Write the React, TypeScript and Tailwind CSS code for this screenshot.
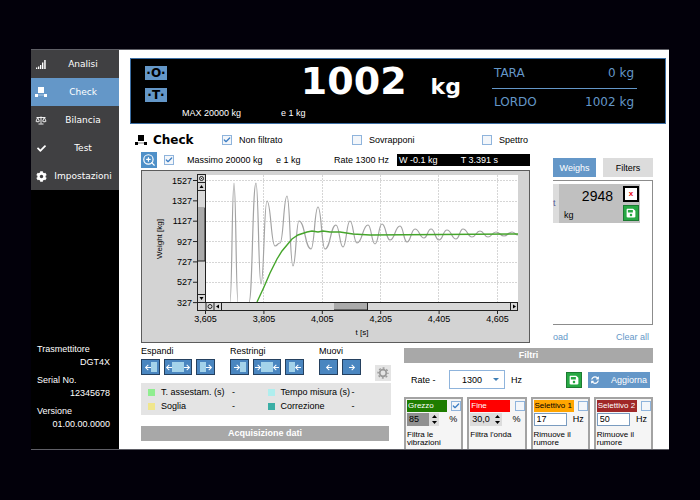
import { ReactNode } from "react";
import {
  FaArrowLeft,
  FaArrowRight,
  FaCheck,
  FaCog,
  FaSave,
  FaSyncAlt,
} from "react-icons/fa";
import { Check, ZoomIn } from "lucide-react";

type Point = [number, number];

const rawSignal: Point[][] = [
  [[89, 132], [93, 13], [97, 132]],
  [
    [108, 132], [115, 13], [120, 114], [126, 31], [134, 76], [139, 73],
    [146, 26], [152, 96], [158, 51], [170, 79], [177, 37], [184, 79],
    [195, 55], [202, 77], [209, 51], [216, 73], [227, 55], [234, 74],
    [241, 54], [249, 70], [259, 56], [266, 72], [274, 59], [283, 68],
    [290, 59], [298, 70], [306, 60], [315, 69], [322, 59], [331, 67],
    [339, 61], [347, 67], [355, 62], [363, 66], [371, 62], [377, 65],
  ],
];

const filteredSignal =
  "M116 132 L123 117 L129 103 L136 89 L141 81 L146 75 L151 69 L157 65 L166 62 L171 61 L177 62 L182 61 L189 62 L199 62 L212 64 L229 65 L377 64";

// horizontal tangents on every extreme
function toPath(points: Point[]) {
  return points
    .map(([x, y], i) => {
      if (i === 0) return `M${x} ${y}`;
      const [px, py] = points[i - 1];
      const mx = (px + x) / 2;
      return `C${mx} ${py} ${mx} ${y} ${x} ${y}`;
    })
    .join(" ");
}

function ModulesIcon({ className }: { className?: string }) {
  return (
    <svg viewBox="0 0 12 12" className={className} fill="currentColor">
      <rect x="3" y="1" width="6" height="6" />
      <rect x="0" y="8" width="3" height="3" />
      <rect x="9" y="8" width="3" height="3" />
      <path d="M3 9h6" stroke="currentColor" strokeWidth="0.5" />
    </svg>
  );
}

function SignalIcon() {
  return (
    <svg viewBox="0 0 10 9" className="h-[9px] w-[10px]" fill="currentColor">
      <path d="M0 7.500h1.300V9H0zM2 6.500h1.300V9H2zM4 5h1.300v4H4zM6 2.500h1.400V9H6zM8.200 0h1.500v9H8.200z" />
    </svg>
  );
}

function BalanceIcon() {
  return (
    <svg viewBox="0 0 12 9" className="h-[9px] w-3" fill="none" stroke="currentColor" strokeWidth="0.9">
      <path d="M1.500 1.500h9M6 0.500v7M3.500 8h5M2.700 1.500L1 5.200M2.700 1.500l1.700 3.700M9.300 1.500L7.600 5.200M9.300 1.500L11 5.200" />
      <path d="M0.700 5.200h4c-.3 1.500-3.700 1.500-4 0zM7.300 5.200h4c-.3 1.500-3.700 1.500-4 0z" fill="currentColor" stroke="none" />
    </svg>
  );
}

function GearIcon() {
  return (
    <svg viewBox="0 0 12 12" className="h-3 w-3" fill="none" stroke="currentColor">
      <circle cx="6" cy="6" r="3.300" strokeWidth="1.700" />
      <circle cx="6" cy="6" r="4.900" strokeWidth="1.500" strokeDasharray="1.924 1.924" strokeDashoffset="0.960" />
    </svg>
  );
}

function CheckBox({
  label,
  checked,
  hideLabel,
}: {
  label: string;
  checked?: boolean;
  hideLabel?: boolean;
}) {
  return (
    <label className="flex items-center gap-[7px]">
      <span className="relative block h-[10px] w-[10px]">
        <input
          type="checkbox"
          defaultChecked={checked}
          aria-label={label}
          className="peer block h-[10px] w-[10px] appearance-none border border-[#8fb4dc] bg-[#f3f6fa]"
        />
        <Check
          className="pointer-events-none absolute inset-px hidden h-2 w-2 text-[#3f7fc4] peer-checked:block"
          strokeWidth={4}
        />
      </span>
      {!hideLabel && <span>{label}</span>}
    </label>
  );
}

const menu = [
  { label: "Analisi", icon: <SignalIcon /> },
  { label: "Check", icon: <ModulesIcon className="h-3 w-3" />, active: true },
  { label: "Bilancia", icon: <BalanceIcon /> },
  { label: "Test", icon: <FaCheck className="h-[9px] w-[9px]" /> },
  { label: "Impostazioni", icon: <FaCog className="h-[11px] w-[11px]" /> },
];

const info = [
  { label: "Trasmettitore", value: "DGT4X" },
  { label: "Serial No.", value: "12345678" },
  { label: "Versione", value: "01.00.00.0000" },
];

function Sidebar() {
  return (
    <aside className="flex w-[88px] shrink-0 flex-col justify-between bg-black text-white">
      <nav className="font-['DejaVu_Sans',sans-serif]">
        {menu.map((item) => (
          <a
            key={item.label}
            href="#"
            className={`flex h-7 items-center pl-1 ${
              item.active ? "bg-[#6497c8]" : "bg-[#404042]"
            }`}
          >
            <span className="flex w-3 justify-center">{item.icon}</span>
            <span className="flex-1 text-center">{item.label}</span>
          </a>
        ))}
      </nav>
      <dl className="pb-[19px] pl-[6px] pr-[9px]">
        {info.map((item) => (
          <div key={item.label} className="mt-[6px]">
            <dt className="h-[13px]">{item.label}</dt>
            <dd className="h-3 text-right">{item.value}</dd>
          </div>
        ))}
      </dl>
    </aside>
  );
}

function Display() {
  return (
    <header className="flex h-[66px] border border-[#3c6ea3] bg-black pl-[14px] pr-7 font-['DejaVu_Sans',sans-serif] text-white">
      <div className="flex flex-1 flex-col">
        <div className="flex h-[46px]">
          <div className="flex flex-col gap-2 pt-[7px]">
            {["O", "T"].map((key) => (
              <button
                key={key}
                className="h-[14px] w-[22px] bg-[#6497c8] text-[12px] leading-[14px] font-bold text-black"
              >
                ·{key}·
              </button>
            ))}
          </div>
          <div className="flex flex-1 items-baseline justify-end gap-6 pr-[31px] font-bold">
            <span className="text-[38px] leading-[44px]">1002</span>
            <span className="text-[22px]">kg</span>
          </div>
        </div>
        <div className="flex gap-10 pl-[37px] pt-[2px] font-['Liberation_Sans',sans-serif]">
          <span>MAX 20000 kg</span>
          <span>e 1 kg</span>
        </div>
      </div>
      <dl className="w-[145px] pt-[3px] text-[12px] leading-[22px] text-[#6497c8]">
        <div className="flex justify-between border-b border-[#6497c8] pb-1 pl-[2px] pr-[3px]">
          <dt>TARA</dt>
          <dd>0 kg</dd>
        </div>
        <div className="flex justify-between pl-[2px] pr-[3px] pt-[2px]">
          <dt>LORDO</dt>
          <dd>1002 kg</dd>
        </div>
      </dl>
    </header>
  );
}

const yTicks = ["1527", "1327", "1127", "927", "727", "527", "327"];
const xTicks = ["3,605", "3,805", "4,005", "4,205", "4,405", "4,605"];

function Chart() {
  return (
    <svg
      viewBox="0 0 389 173"
      className="block h-auto w-full bg-[#d3d3d3]"
      role="img"
      aria-label="Weight"
      fontSize="9"
    >
      <rect x="65" y="5" width="312" height="128" fill="#fff" />
      <g stroke="#d6d6d6" strokeDasharray="2 1" strokeWidth="1">
        {[10.5, 31.5, 51.5, 71.5, 92.5, 112.5].map((y) => (
          <path key={y} d={`M65 ${y}H377`} />
        ))}
        {[122.5, 181.5, 239.5, 297.5, 356.5].map((x) => (
          <path key={x} d={`M${x} 5V132`} />
        ))}
      </g>
      {rawSignal.map((points, i) => (
        <path key={i} d={toPath(points)} fill="none" stroke="#a3a3a3" strokeWidth="1.2" />
      ))}
      <path d={filteredSignal} fill="none" stroke="#45a52b" strokeWidth="1.4" />

      {/* vertical scroll bar */}
      <rect x="56" y="4" width="9" height="137" fill="#d3d3d3" />
      <rect x="56.5" y="4.5" width="8" height="128" fill="#d8d8d8" stroke="#222" />
      <rect x="57" y="37" width="7" height="54" fill="#aaa" />
      <path d="M57 91h7M64 38v53M57 12.5h7M57 20.5h7M57 124.5h7" stroke="#222" fill="none" />
      <circle cx="60.5" cy="8.5" r="2" fill="none" stroke="#222" />
      <circle cx="60.5" cy="8.5" r="0.6" />
      <path d="M58.5 18l2-3 2 3zM58.5 127l2 3 2-3z" />

      {/* horizontal scroll bar */}
      <rect x="56.5" y="132.5" width="320" height="8" fill="#d8d8d8" stroke="#222" />
      <rect x="193" y="133" width="33" height="7" fill="#aaa" />
      <path d="M193 140h33.5v-7M65 133v7M73 133v7M80.500 133v7M369.500 133v7" stroke="#222" fill="none" />
      <circle cx="69" cy="136.500" r="2" fill="none" stroke="#222" />
      <path d="M78 134.500l-3 2 3 2zM372 134.500l3 2-3 2z" />

      {yTicks.map((tick, i) => {
        const y = 10.5 + i * 20.35;
        return (
          <g key={tick}>
            <path d={`M52 ${y}h4`} stroke="#222" />
            <text x="51" y={y + 3} textAnchor="end">
              {tick}
            </text>
          </g>
        );
      })}
      {xTicks.map((tick, i) => {
        const x = 64.5 + i * 58.4;
        return (
          <g key={tick}>
            <path d={`M${x} 141v3`} stroke="#222" />
            <text x={x} y="152" textAnchor="middle">
              {tick}
            </text>
          </g>
        );
      })}
      <text x="221" y="165" textAnchor="middle" fontSize="8">
        t [s]
      </text>
      <text transform="translate(21 69) rotate(-90)" textAnchor="middle" fontSize="8">
        Weight [kg]
      </text>
      <rect x="0.5" y="0.5" width="388" height="172" fill="none" stroke="#5c5c5c" />
    </svg>
  );
}

function SaveButton() {
  return (
    <button
      aria-label="Salva"
      className="flex h-4 w-4 items-center justify-center border border-[#1c7a32] bg-[#27a844] text-white"
    >
      <FaSave className="h-[10px] w-[10px]" />
    </button>
  );
}

function Weighs() {
  return (
    <section className="w-[100px] shrink-0 pt-[6px]">
      <div className="flex gap-[7px]">
        <button className="h-[19px] w-[43px] bg-[#6497c8] text-white">Weighs</button>
        <button className="h-[19px] flex-1 bg-[#dcdcdc]">Filters</button>
      </div>
      <div className="mt-[3px] h-[145px] border-y border-r border-[#8c8c8c] pr-3 pt-[3px]">
        <div className="flex h-[39px] bg-[#c0c0c0]">
          <span className="w-[6px] bg-[#dcdcdc] pt-[13px] leading-3 text-[#5a5a9a]">t</span>
          <div className="flex flex-1 flex-col justify-between pl-[5px] pr-[10px]">
            <span className="text-right text-[14px] leading-6">2948</span>
            <span className="leading-[15px]">kg</span>
          </div>
          <div className="flex flex-col gap-[3px] pr-px pt-[2px]">
            <button
              aria-label="Elimina"
              className="flex h-4 w-4 items-center justify-center border-2 border-black bg-white text-[8px] leading-none font-bold text-red-600"
            >
              x
            </button>
            <SaveButton />
          </div>
        </div>
      </div>
      <div className="flex h-[18px] items-end justify-between pr-1 text-[#6497c8]">
        <a href="#">oad</a>
        <a href="#">Clear all</a>
      </div>
    </section>
  );
}

function RangeButton({
  label,
  wide,
  children,
}: {
  label: string;
  wide?: boolean;
  children: ReactNode;
}) {
  return (
    <button
      aria-label={label}
      className={`flex h-4 items-center justify-center border border-[#24405f] bg-[#4a86c0] text-white ${
        wide ? "w-7" : "w-[19px]"
      }`}
    >
      {children}
    </button>
  );
}

const left = <FaArrowLeft className="h-[7px] w-[6px]" />;
const right = <FaArrowRight className="h-[7px] w-[6px]" />;
const block = <span className="h-[10px] w-[6px] bg-[#a4d3ea]" />;
const wideBlock = <span className="h-[10px] w-3 bg-[#a4d3ea]" />;

const legend = [
  { label: "T. assestam. (s)", color: "bg-[#90ee90]" },
  { label: "Tempo misura (s)", color: "bg-[#afeeee]" },
  { label: "Soglia", color: "bg-[#f0e68c]" },
  { label: "Correzione", color: "bg-[#3aaea5]" },
];

function Acquisition() {
  return (
    <section className="flex-1 pt-[2px]">
      <div className="flex">
        <div className="w-[89px]">
          <h3 className="h-[14px]">Espandi</h3>
          <div className="flex gap-1">
            <RangeButton label="Espandi a sinistra">{left}{block}</RangeButton>
            <RangeButton label="Espandi" wide>{left}{wideBlock}{right}</RangeButton>
            <RangeButton label="Espandi a destra">{block}{right}</RangeButton>
          </div>
        </div>
        <div className="w-[89px]">
          <h3 className="h-[14px]">Restringi</h3>
          <div className="flex gap-1">
            <RangeButton label="Restringi da sinistra">{right}{block}</RangeButton>
            <RangeButton label="Restringi" wide>{right}{wideBlock}{left}</RangeButton>
            <RangeButton label="Restringi da destra">{block}{left}</RangeButton>
          </div>
        </div>
        <div className="flex-1">
          <h3 className="h-[14px]">Muovi</h3>
          <div className="flex gap-1">
            <RangeButton label="Muovi a sinistra">{left}</RangeButton>
            <RangeButton label="Muovi a destra">{right}</RangeButton>
          </div>
        </div>
        <button
          aria-label="Opzioni"
          className="mt-5 flex h-4 w-4 items-center justify-center bg-[#e4e4e4] text-[#9a9a9a]"
        >
          <GearIcon />
        </button>
      </div>
      <dl className="mt-[2px] grid h-8 grid-cols-2 items-center bg-[#e4e4e4] py-[2px] pl-[7px] pr-1">
        {legend.map((item) => (
          <div key={item.label} className="flex items-center">
            <span className={`h-[7px] w-[7px] ${item.color}`} />
            <dt className="w-[77px] pl-[6px] whitespace-nowrap">{item.label}</dt>
            <dd>-</dd>
          </div>
        ))}
      </dl>
      <h2 className="mt-[11px] mr-[2px] h-[15px] bg-[#a8a8a8] text-center leading-[15px] font-bold text-white">
        Acquisizione dati
      </h2>
    </section>
  );
}

const filters = [
  { name: "Grezzo", value: "85", unit: "%", color: "bg-[#1f7d00] text-white", text: "Filtra le vibrazioni", spin: true, checked: true, field: "bg-[#909090]" },
  { name: "Fine", value: "30,0", unit: "%", color: "bg-[#ff0000] text-white", text: "Filtra l'onda", spin: true, field: "bg-[#dcdcdc]" },
  { name: "Selettivo 1", value: "17", unit: "Hz", color: "bg-[#ffa500]", text: "Rimuove il rumore" },
  { name: "Selettivo 2", value: "50", unit: "Hz", color: "bg-[#a02828] text-white", text: "Rimuove il rumore" },
];

function Filters() {
  return (
    <section className="flex w-[249px] flex-col pt-[5px]">
      <h2 className="h-[15px] bg-[#a8a8a8] text-center leading-[15px] font-bold text-white">Filtri</h2>
      <div className="flex items-center py-[7px] pl-[7px] pr-[3px]">
        <label htmlFor="rate" className="w-[38px]">
          Rate -
        </label>
        <div className="relative">
          <select
            id="rate"
            className="h-[19px] w-14 appearance-none border border-[#8fb4dc] bg-white pl-3"
          >
            <option>1300</option>
          </select>
          <svg viewBox="0 0 6 3" className="pointer-events-none absolute right-[6px] top-2 h-[3px] w-[6px]">
            <path d="M0 0h6L3 3z" fill="#3f7fb5" />
          </svg>
        </div>
        <span className="flex-1 pl-[6px]">Hz</span>
        <SaveButton />
        <button className="ml-[6px] flex h-4 w-[62px] items-center gap-3 bg-[#6497c8] pl-[3px] text-white">
          <FaSyncAlt className="h-2 w-2" />
          Aggiorna
        </button>
      </div>
      <div className="mt-px grid flex-1 grid-cols-4 gap-1">
        {filters.map((filter) => (
          <article
            key={filter.name}
            className="border-2 border-b-0 border-[#a3a3a3] bg-[#f5f5f5] pl-px"
          >
            <div className="flex justify-between">
              <h3 className={`mt-px h-3 w-10 pl-px text-[8px] leading-3 whitespace-nowrap ${filter.color}`}>
                {filter.name}
              </h3>
              <CheckBox label={filter.name} checked={filter.checked} hideLabel />
            </div>
            <div className="flex h-[14px] items-center">
              <input
                aria-label={`Valore ${filter.name}`}
                defaultValue={filter.value}
                className={`h-[13px] px-[2px] ${
                  filter.spin ? `w-[22px] ${filter.field}` : "w-[33px] border border-[#7a9cc0] bg-white"
                }`}
              />
              {filter.spin && (
                <span className="flex w-[10px] flex-col items-center gap-[3px] bg-[#dcdcdc] py-[2px]">
                  <button aria-label="Aumenta" className="h-[3px] w-[5px]">
                    <svg viewBox="0 0 5 3" className="block"><path d="M0 3h5L2.5 0z" /></svg>
                  </button>
                  <button aria-label="Diminuisci" className="h-[3px] w-[5px]">
                    <svg viewBox="0 0 5 3" className="block"><path d="M0 0h5L2.5 3z" /></svg>
                  </button>
                </span>
              )}
              <span className="flex-1 pr-1 text-right">{filter.unit}</span>
            </div>
            <p className="w-12 pt-[5px] text-[8px] leading-2">{filter.text}</p>
          </article>
        ))}
      </div>
    </section>
  );
}

export default function App() {
  return (
    <div className="flex min-h-screen bg-[#02000a] px-[31px] pt-[49px] pb-[50px] font-['Liberation_Sans',sans-serif] text-[9px] leading-3 text-black">
      <div className="flex flex-1 border-y border-[#5f5f66]">
        <Sidebar />
        <main className="flex min-w-0 flex-1 flex-col bg-white pl-[11px] pr-[3px] pt-2">
          <Display />
          <div className="flex items-center pl-[5px] pt-2">
            <ModulesIcon className="h-3 w-3" />
            <h1 className="w-[75px] pl-[6px] font-['DejaVu_Sans',sans-serif] text-[12px] leading-4 font-bold">Check</h1>
            <div className="w-[130px]">
              <CheckBox label="Non filtrato" checked />
            </div>
            <div className="w-[130px]">
              <CheckBox label="Sovrapponi" />
            </div>
            <CheckBox label="Spettro" />
          </div>
          <div className="flex gap-[23px] pl-[11px] pr-[13px] pt-1">
            <section className="min-w-0 flex-1">
              <div className="flex items-center pb-[2px]">
                <button
                  aria-label="Zoom"
                  className="mr-[7px] flex h-4 w-4 items-center justify-center bg-[#4f90c8] text-white"
                >
                  <ZoomIn className="h-[14px] w-[14px]" />
                </button>
                <CheckBox label="Massimo" checked hideLabel />
                <span className="w-[102px] pl-[13px]">Massimo 20000 kg</span>
                <span className="flex-1">e 1 kg</span>
                <span>Rate 1300 Hz</span>
                <span className="ml-2 flex w-[133px] justify-between bg-black pl-[2px] pr-8 text-white">
                  <span>W -0.1 kg</span>
                  <span>T 3.391 s</span>
                </span>
              </div>
              <Chart />
            </section>
            <Weighs />
          </div>
          <div className="flex flex-1 gap-[13px] pl-[11px] pr-[13px]">
            <Acquisition />
            <Filters />
          </div>
        </main>
      </div>
    </div>
  );
}
